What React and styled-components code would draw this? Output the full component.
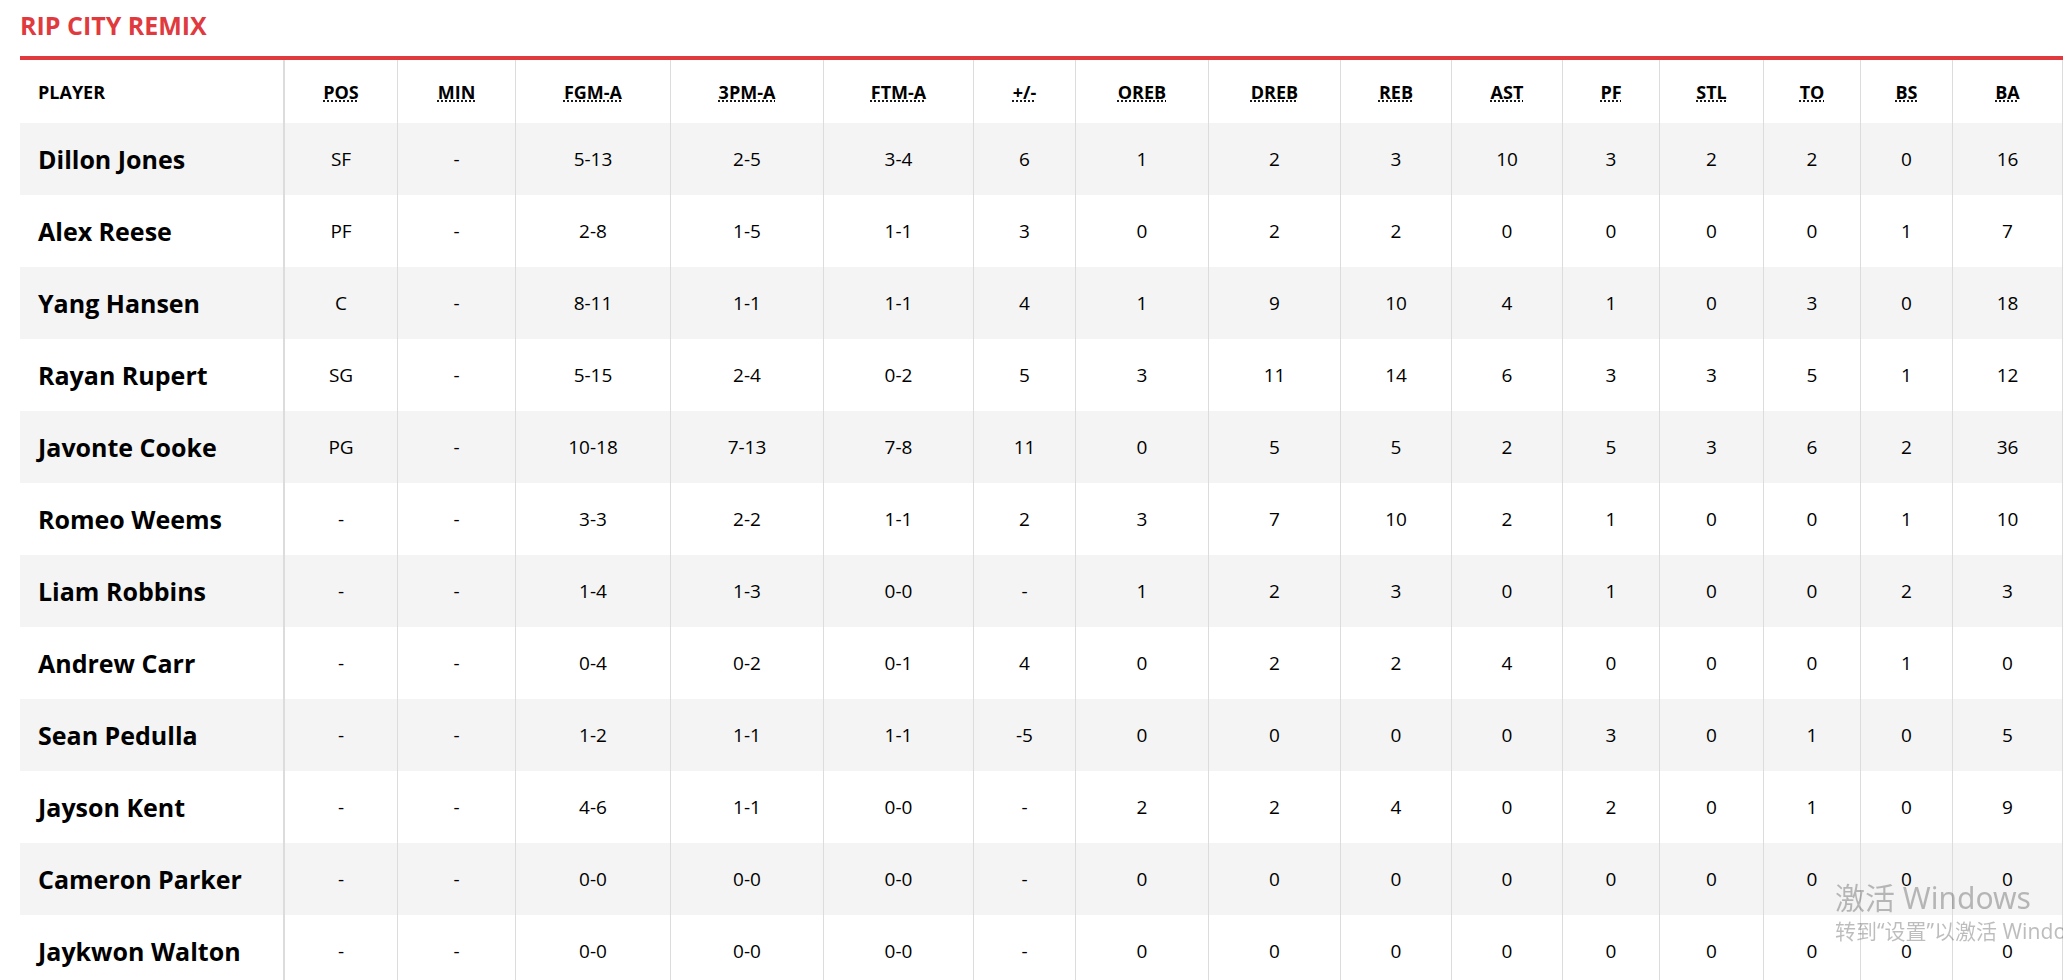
import React from "react";
import styled, { createGlobalStyle } from "styled-components";

// Global page styles
const GlobalStyle = createGlobalStyle`
  html, body {
    margin: 0;
    padding: 0;
    overflow: hidden;
    background: #fff;
  }

  body {
    font-family: "Segoe UI", "Open Sans", "Noto Sans", sans-serif;
    color: #000;
  }
`;

const RED = "#e03a3e";
const LINE = "#dcdcdc";

// column setup: label, title, width
const columns = [
  { key: "pos", label: "POS", title: "Position", width: 113 },
  { key: "min", label: "MIN", title: "Minutes", width: 118 },
  { key: "fgm", label: "FGM-A", title: "Field Goals Made-Attempted", width: 155 },
  { key: "tpm", label: "3PM-A", title: "3-Pointers Made-Attempted", width: 153 },
  { key: "ftm", label: "FTM-A", title: "Free Throws Made-Attempted", width: 150 },
  { key: "pm", label: "+/-", title: "Plus/Minus", width: 102 },
  { key: "oreb", label: "OREB", title: "Offensive Rebounds", width: 133 },
  { key: "dreb", label: "DREB", title: "Defensive Rebounds", width: 132 },
  { key: "reb", label: "REB", title: "Rebounds", width: 111 },
  { key: "ast", label: "AST", title: "Assists", width: 111 },
  { key: "pf", label: "PF", title: "Personal Fouls", width: 97 },
  { key: "stl", label: "STL", title: "Steals", width: 104 },
  { key: "to", label: "TO", title: "Turnovers", width: 97 },
  { key: "bs", label: "BS", title: "Blocked Shots", width: 92 },
  { key: "ba", label: "BA", title: "Points", width: 110 },
];

const players = [
  ["Dillon Jones", "SF", "-", "5-13", "2-5", "3-4", "6", "1", "2", "3", "10", "3", "2", "2", "0", "16"],
  ["Alex Reese", "PF", "-", "2-8", "1-5", "1-1", "3", "0", "2", "2", "0", "0", "0", "0", "1", "7"],
  ["Yang Hansen", "C", "-", "8-11", "1-1", "1-1", "4", "1", "9", "10", "4", "1", "0", "3", "0", "18"],
  ["Rayan Rupert", "SG", "-", "5-15", "2-4", "0-2", "5", "3", "11", "14", "6", "3", "3", "5", "1", "12"],
  ["Javonte Cooke", "PG", "-", "10-18", "7-13", "7-8", "11", "0", "5", "5", "2", "5", "3", "6", "2", "36"],
  ["Romeo Weems", "-", "-", "3-3", "2-2", "1-1", "2", "3", "7", "10", "2", "1", "0", "0", "1", "10"],
  ["Liam Robbins", "-", "-", "1-4", "1-3", "0-0", "-", "1", "2", "3", "0", "1", "0", "0", "2", "3"],
  ["Andrew Carr", "-", "-", "0-4", "0-2", "0-1", "4", "0", "2", "2", "4", "0", "0", "0", "1", "0"],
  ["Sean Pedulla", "-", "-", "1-2", "1-1", "1-1", "-5", "0", "0", "0", "0", "3", "0", "1", "0", "5"],
  ["Jayson Kent", "-", "-", "4-6", "1-1", "0-0", "-", "2", "2", "4", "0", "2", "0", "1", "0", "9"],
  ["Cameron Parker", "-", "-", "0-0", "0-0", "0-0", "-", "0", "0", "0", "0", "0", "0", "0", "0", "0"],
  ["Jaykwon Walton", "-", "-", "0-0", "0-0", "0-0", "-", "0", "0", "0", "0", "0", "0", "0", "0", "0"],
];

// Styling
const Page = styled.main`
  padding-left: 20px;
`;

const TeamTitle = styled.h2`
  margin: 0;
  padding: 13px 0 19px;
  font-size: 25px;
  line-height: 24px;
  font-weight: 700;
  color: ${RED};
  border-bottom: 4px solid ${RED};
`;

const Table = styled.table`
  width: 2043px;
  table-layout: fixed;
  border-collapse: separate;
  border-spacing: 0;
`;

const HeadRow = styled.tr`
  height: 63px;
`;

const Row = styled.tr`
  height: 72px;
  background: ${(props) => (props.$striped ? "#f4f4f4" : "#fff")};
`;

const HeadCell = styled.th`
  padding: 0;
  font-size: 18px;
  font-weight: 700;
  text-align: center;
  vertical-align: middle;
  border-right: 1px solid ${LINE};

  abbr {
    text-decoration: underline dotted;
    text-underline-offset: 2px;
    cursor: help;
  }
`;

const PlayerHead = styled(HeadCell)`
  text-align: left;
  padding-left: 18px;
  border-right-width: 2px;
`;

const Cell = styled.td`
  padding: 0;
  font-size: 19px;
  text-align: center;
  vertical-align: middle;
  border-right: 1px solid ${LINE};
`;

const NameCell = styled(Cell)`
  text-align: left;
  padding-left: 18px;
  font-size: 25px;
  font-weight: 700;
  border-right-width: 2px;
  white-space: nowrap;
`;

// Windows activation watermark over the page
const Watermark = styled.div`
  position: fixed;
  left: 1835px;
  top: 878px;
  color: rgba(0, 0, 0, 0.26);
  font-family: "Segoe UI", "Noto Sans", "Noto Sans CJK SC", sans-serif;
  white-space: nowrap;
  pointer-events: none;

  .big {
    font-size: 30px;
    line-height: 40px;
  }

  .small {
    font-size: 21px;
    line-height: 26px;
  }
`;

const App = () => {
  return (
    <>
      <GlobalStyle />
      <Page>
        <TeamTitle>RIP CITY REMIX</TeamTitle>
        <Table>
          <colgroup>
            <col style={{ width: 265 }} />
            {columns.map((c) => (
              <col key={c.key} style={{ width: c.width }} />
            ))}
          </colgroup>
          <thead>
            <HeadRow>
              <PlayerHead>PLAYER</PlayerHead>
              {columns.map((c) => (
                <HeadCell key={c.key}>
                  <abbr title={c.title}>{c.label}</abbr>
                </HeadCell>
              ))}
            </HeadRow>
          </thead>
          <tbody>
            {players.map(([name, ...stats], i) => (
              <Row key={name} $striped={i % 2 === 0}>
                <NameCell>{name}</NameCell>
                {stats.map((s, j) => (
                  <Cell key={j}>{s}</Cell>
                ))}
              </Row>
            ))}
          </tbody>
        </Table>
      </Page>
      <Watermark>
        <div className="big">激活 Windows</div>
        <div className="small">转到“设置”以激活 Windows。</div>
      </Watermark>
    </>
  );
};

export default App;
